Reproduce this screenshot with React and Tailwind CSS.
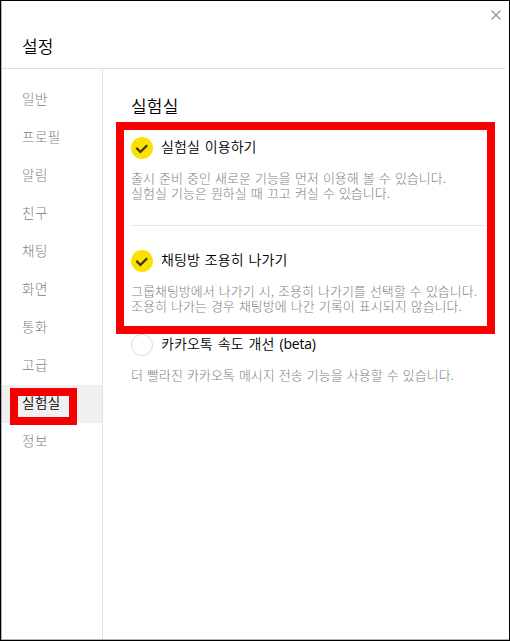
import React, { useState } from "react";

const menus = [
  "일반",
  "프로필",
  "알림",
  "친구",
  "채팅",
  "화면",
  "통화",
  "고급",
  "실험실",
  "정보",
];

function Check({ checked, onClick }) {
  return (
    <button type="button" onClick={onClick} className="h-[22px] w-[22px] shrink-0">
      <svg viewBox="0 0 22 22" width="22" height="22" fill="none">
        {checked ? (
          <>
            <circle cx="11" cy="11" r="11" fill="#fae100" />
            <path d="M5.3 10.9l4.1 4.1 6.8-6.8" stroke="#3b2f1c" strokeWidth="2.2" />
          </>
        ) : (
          <circle cx="11" cy="11" r="10.5" stroke="#dcdcdc" />
        )}
      </svg>
    </button>
  );
}

function Option({ title, checked, onClick, children }) {
  return (
    <div>
      <div className="flex h-[22px]">
        <Check checked={checked} onClick={onClick} />
        <div className="ml-2 text-[14px] leading-[18px] tracking-[0.06px] whitespace-nowrap text-black [font-weight:350] [word-spacing:1.8px]">
          {title}
        </div>
      </div>
      <div className="mt-[11px] text-[13px] leading-[15px] font-light whitespace-nowrap text-[#808080] [word-spacing:1.2px]">
        {children}
      </div>
    </div>
  );
}

function App() {
  const [active, setActive] = useState("실험실");
  const [options, setOptions] = useState({ lab: true, leave: true, speed: false });

  const toggle = (key) => setOptions({ ...options, [key]: !options[key] });

  return (
    <div className="relative flex h-[641px] w-[510px] flex-col border border-black bg-white font-['Noto_Sans_CJK_KR',sans-serif]">
      <div className="flex min-h-0 flex-1 flex-col border-b border-l border-[#b5b5b5]">
        <header className="relative mr-1 h-[68px] shrink-0 border-b border-[#dedede] pt-[33px] pl-[20px]">
          <h1 className="text-[17px] leading-[24px] text-black [font-weight:350]">설정</h1>
          <button type="button" className="absolute top-[9px] right-[4px]">
            <svg
              className="block"
              width="10"
              height="10"
              viewBox="0 0 10 10"
              stroke="#999"
              strokeWidth="1.4"
            >
              <path d="M0.5 0.5l9 9M9.5 0.5l-9 9" />
            </svg>
          </button>
        </header>
        <div className="flex min-h-0 flex-1">
          <nav className="w-[101px] shrink-0 border-r border-[#e2e2e2] pt-[12px]">
            {menus.map((menu) => (
              <button
                key={menu}
                type="button"
                onClick={() => setActive(menu)}
                className={
                  menu === active
                    ? "block h-[38px] w-full bg-[#f0f0f0] pb-[4px] pl-[20px] text-left text-[13.5px] tracking-[0.5px] text-black [font-weight:350]"
                    : "block h-[38px] w-full pb-[4px] pl-[20px] text-left text-[13.5px] font-light tracking-[0.5px] text-[#808080]"
                }
              >
                {menu}
              </button>
            ))}
          </nav>
          <main className="flex-1 pt-[25px] pr-[24px] pl-[28px]">
            <h2 className="text-[17px] leading-[24px] tracking-[0.2px] text-black [font-weight:350]">
              실험실
            </h2>
            <div className="mt-[19px] border-b border-[#e5e5e5] pb-[25px]">
              <Option
                title="실험실 이용하기"
                checked={options.lab}
                onClick={() => toggle("lab")}
              >
                출시 준비 중인 새로운 기능을 먼저 이용해 볼 수 있습니다.
                <br />
                실험실 기능은 원하실 때 끄고 켜실 수 있습니다.
              </Option>
            </div>
            <div className="pt-[24px]">
              <Option
                title="채팅방 조용히 나가기"
                checked={options.leave}
                onClick={() => toggle("leave")}
              >
                그룹채팅방에서 나가기 시, 조용히 나가기를 선택할 수 있습니다.
                <br />
                조용히 나가는 경우 채팅방에 나간 기록이 표시되지 않습니다.
              </Option>
            </div>
            <div className="pt-[21px]">
              <Option
                title={
                  <>
                    카카오톡 속도 개선{" "}
                    <span className="font-['Open_Sans'] font-normal tracking-[-0.2px]">
                      (beta)
                    </span>
                  </>
                }
                checked={options.speed}
                onClick={() => toggle("speed")}
              >
                더 빨라진 카카오톡 메시지 전송 기능을 사용할 수 있습니다.
              </Option>
            </div>
          </main>
        </div>
      </div>

      {/* highlight boxes */}
      <div className="pointer-events-none absolute top-[121px] left-[115px] h-[212px] w-[379px] border-8 border-[#f80000]" />
      <div className="pointer-events-none absolute top-[387px] left-[9px] h-[37px] w-[67px] border-8 border-[#f50000]" />
    </div>
  );
}

export default App;
